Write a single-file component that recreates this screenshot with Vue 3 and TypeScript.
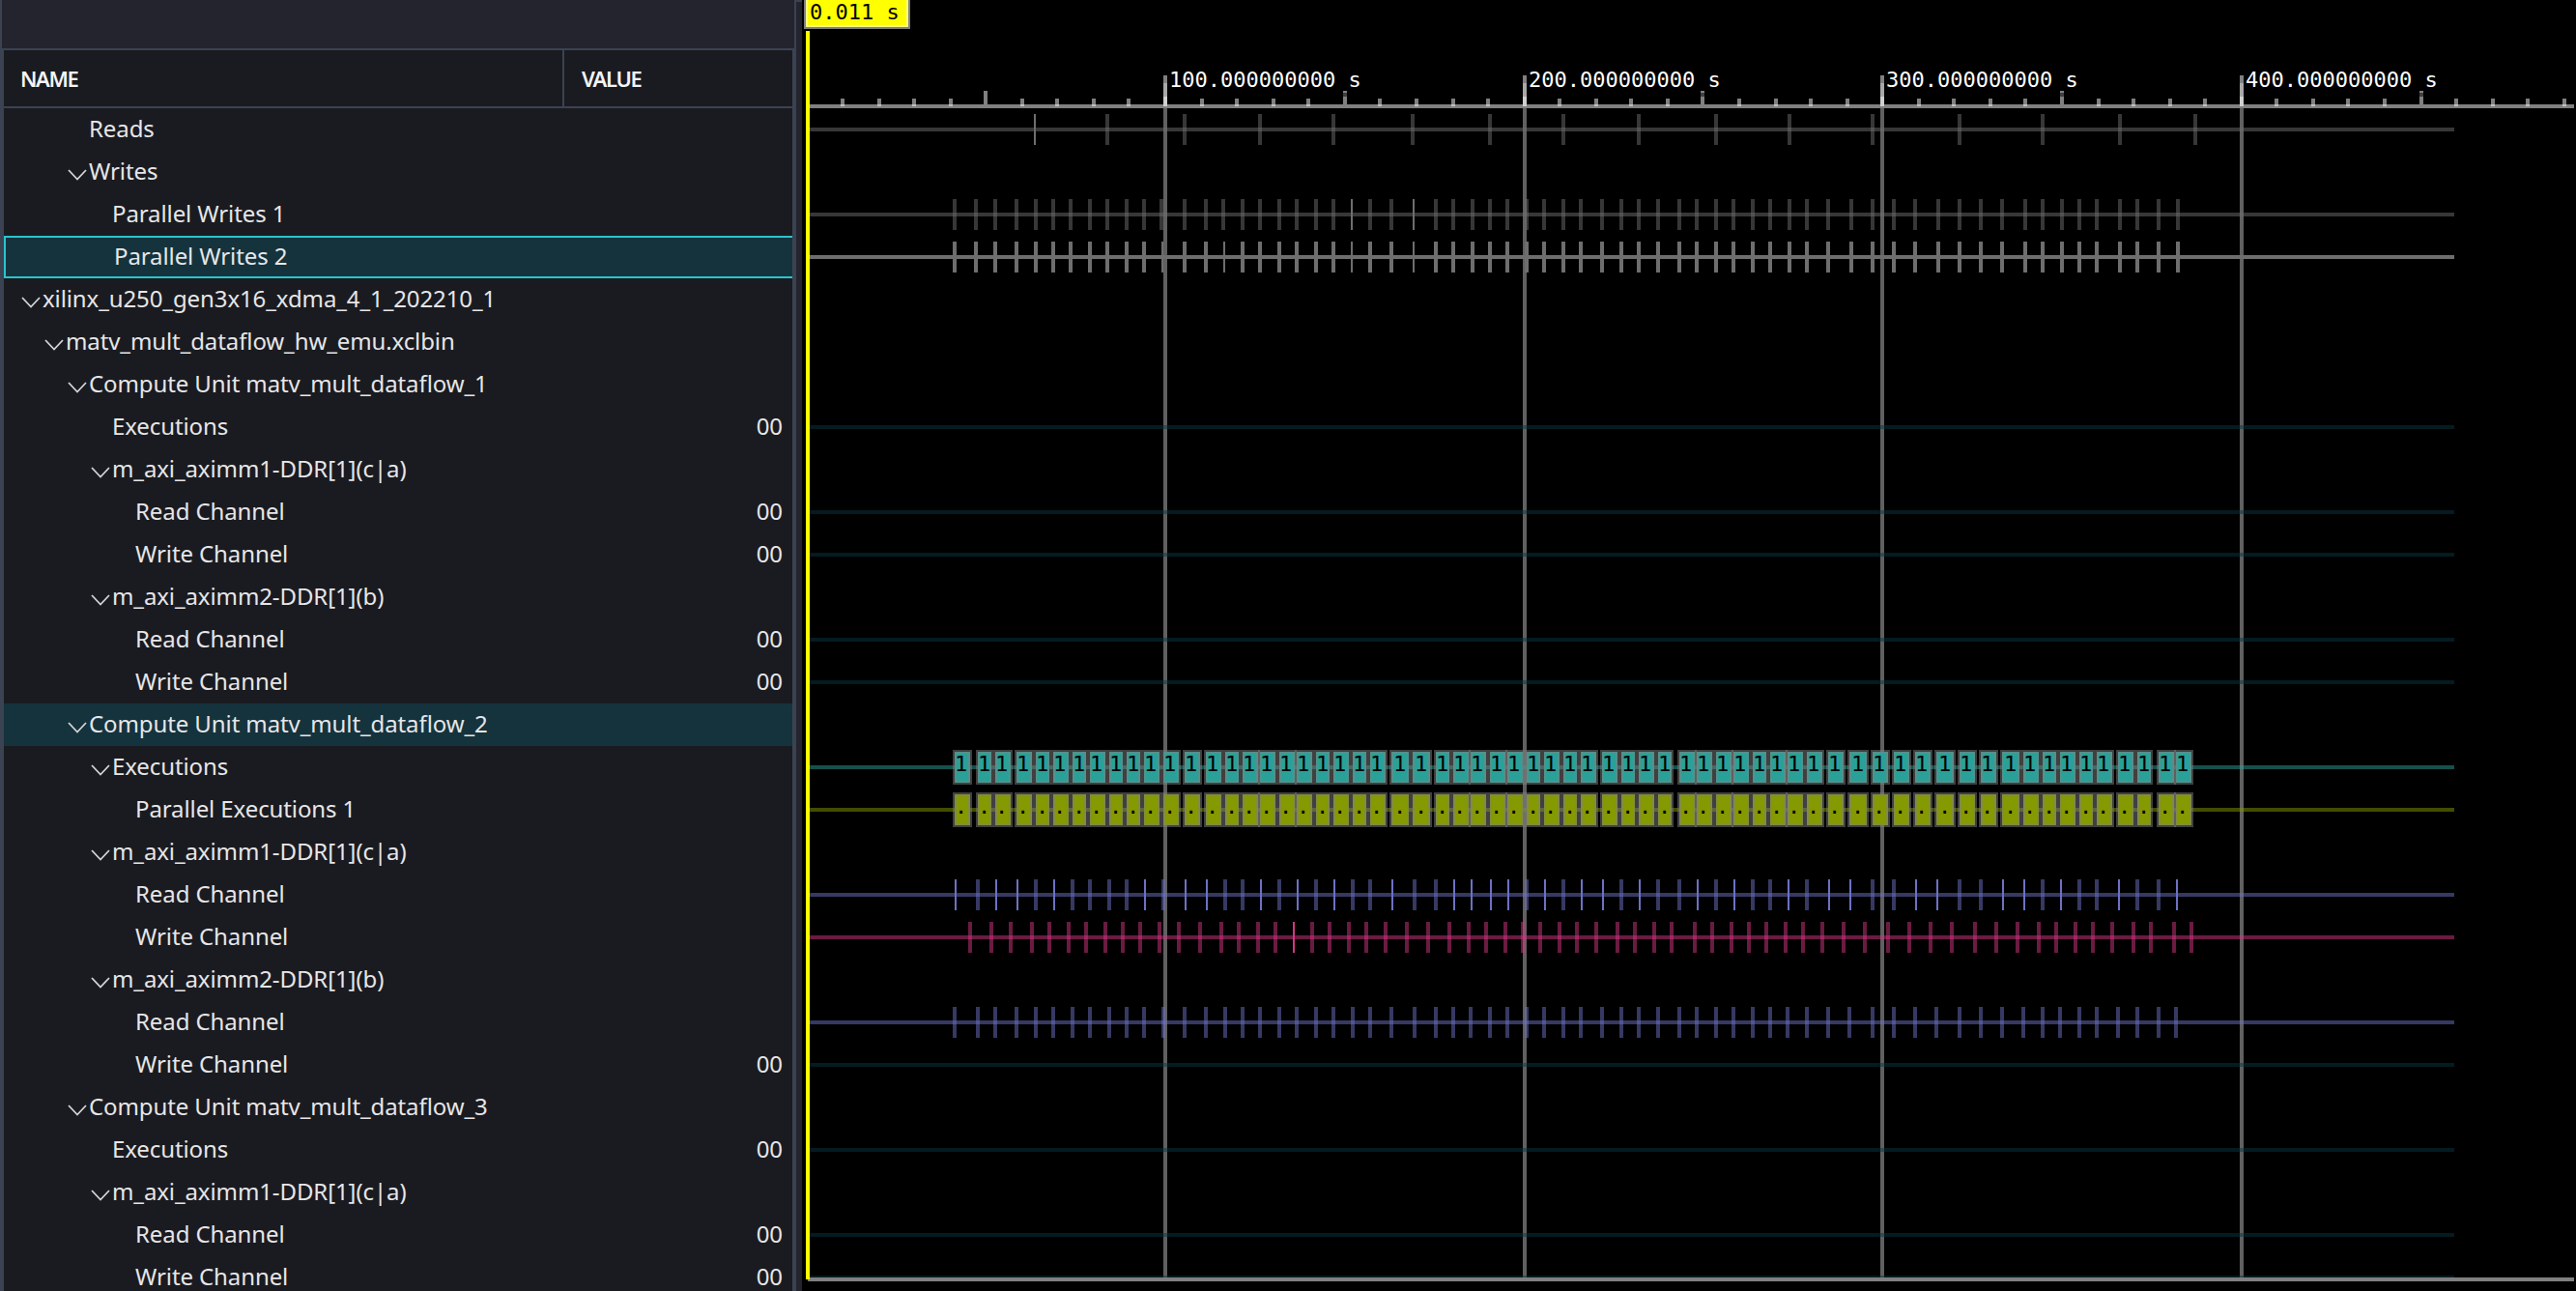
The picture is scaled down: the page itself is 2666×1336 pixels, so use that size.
<script setup lang="ts">
interface TreeRow {
  label: string
  level: number
  open?: boolean
  value?: string
  state?: 'selected' | 'related'
  wave?: Wave
}

interface Wave {
  color: string
  opacity?: number
  ticks?: Tick[]
  blocks?: 'count' | 'elided'
}

interface Tick {
  x: number
  w: number
  thin: boolean
}

const ROW = 44
const HEADER = 112

// A negative entry marks an instant event that falls inside a single pixel.
const toTicks = (xs: number[]): Tick[] =>
  xs.map((x) => ({ x: Math.abs(x), w: x < 0 ? 2 : 4, thin: x < 0 }))

const reads = toTicks([
  -1070, 1144, 1224, 1302, 1378, 1460, 1540, 1616, 1694, 1774, 1850, 1936, 2026, 2112, 2192, 2270,
])

const writes1 = toTicks([
  986, 1008, 1028, 1050, 1070, 1088, 1106, 1126, 1144, 1164, 1182, 1200, 1224, 1246, 1264, 1284,
  1302, 1322, 1340, 1360, 1378, -1398, 1416, 1438, -1462, 1484, 1502, 1522, 1540, 1558, 1578, 1596,
  1616, 1634, 1656, 1676, 1694, 1714, 1736, 1754, 1774, 1792, 1812, 1830, 1850, 1868, 1890, 1914,
  1936, 1958, 1980, 2004, 2026, 2048, 2070, 2094, 2112, 2132, 2150, 2168, 2192, 2210, 2232, 2252,
])

const writes2 = writes1.map((t) =>
  t.x === 1200 || t.x === 1264 ? { x: t.x + 2, w: 2, thin: true } : t,
)

const readA = toTicks([
  -988, 1010, -1030, -1052, 1070, -1090, 1108, 1126, 1146, 1164, -1184, 1202, -1226, -1248, 1266,
  1284, -1304, 1322, -1342, 1360, -1380, 1398, 1416, -1440, 1462, 1484, -1504, -1522, -1542, -1560,
  1578, -1598, 1616, -1636, -1658, 1676, -1696, 1714, 1736, -1756, 1774, -1794, 1812, 1830, -1850,
  1868, -1892, -1914, 1936, 1958, -1982, -2004, 2026, 2048, -2072, -2094, 2112, -2132, 2150, 2168,
  -2192, 2210, 2232, -2252,
])

const writeA = toTicks([
  1002, 1024, 1044, 1066, 1084, 1104, 1122, 1142, 1160, 1178, 1198, 1218, 1240, 1262, 1280, 1300,
  1318, -1338, 1356, 1374, 1394, 1412, 1432, 1454, 1476, 1498, 1518, 1536, 1556, 1574, 1592, 1612,
  1630, 1650, 1672, 1690, 1710, 1728, 1752, 1770, 1790, 1808, 1826, 1846, 1864, 1884, 1906, 1928,
  1952, 1974, 1996, 2018, 2042, 2064, 2086, 2108, 2126, 2146, 2164, 2184, 2206, 2224, 2248, 2266,
])

const readB = toTicks(readA.map((t) => (t.thin ? t.x - 2 : t.x)))

// Executions whose rounded extent grows by one device pixel on the right.
const wide = new Set([23, 24, 47, 51, 54])

// Each execution spans from its first read to its last write.
const executions = readA.map((t, i) => {
  const isWide = wide.has(i)
  const start = t.thin || isWide ? t.x : t.x + 2
  const end = writeA[i].x + (isWide ? 4 : 2)
  return { x: start, w: end - start, textX: isWide ? start + 2 : start }
})

const idle: Wave = { color: '#073642', opacity: 0.5 }

const rows: TreeRow[] = [
  { label: 'Reads', level: 2, wave: { color: '#6e6e6e', opacity: 0.5, ticks: reads } },
  { label: 'Writes', level: 2, open: true },
  { label: 'Parallel Writes 1', level: 3, wave: { color: '#6e6e6e', opacity: 0.5, ticks: writes1 } },
  {
    label: 'Parallel Writes 2',
    level: 3,
    state: 'selected',
    wave: { color: '#6e6e6e', opacity: 1, ticks: writes2 },
  },
  { label: 'xilinx_u250_gen3x16_xdma_4_1_202210_1', level: 0, open: true },
  { label: 'matv_mult_dataflow_hw_emu.xclbin', level: 1, open: true },
  { label: 'Compute Unit matv_mult_dataflow_1', level: 2, open: true },
  { label: 'Executions', level: 3, value: '00', wave: idle },
  { label: 'm_axi_aximm1-DDR[1](c|a)', level: 3, open: true },
  { label: 'Read Channel', level: 4, value: '00', wave: idle },
  { label: 'Write Channel', level: 4, value: '00', wave: idle },
  { label: 'm_axi_aximm2-DDR[1](b)', level: 3, open: true },
  { label: 'Read Channel', level: 4, value: '00', wave: idle },
  { label: 'Write Channel', level: 4, value: '00', wave: idle },
  { label: 'Compute Unit matv_mult_dataflow_2', level: 2, open: true, state: 'related' },
  { label: 'Executions', level: 3, open: true, wave: { color: '#2aa198', blocks: 'count' } },
  { label: 'Parallel Executions 1', level: 4, wave: { color: '#859900', blocks: 'elided' } },
  { label: 'm_axi_aximm1-DDR[1](c|a)', level: 3, open: true },
  { label: 'Read Channel', level: 4, wave: { color: '#6c71c4', ticks: readA } },
  { label: 'Write Channel', level: 4, wave: { color: '#d33682', ticks: writeA } },
  { label: 'm_axi_aximm2-DDR[1](b)', level: 3, open: true },
  { label: 'Read Channel', level: 4, wave: { color: '#6c71c4', ticks: readB.map((t) => ({ ...t, w: 4, thin: false })) } },
  { label: 'Write Channel', level: 4, value: '00', wave: idle },
  { label: 'Compute Unit matv_mult_dataflow_3', level: 2, open: true },
  { label: 'Executions', level: 3, value: '00', wave: idle },
  { label: 'm_axi_aximm1-DDR[1](c|a)', level: 3, open: true },
  { label: 'Read Channel', level: 4, value: '00', wave: idle },
  { label: 'Write Channel', level: 4, value: '00', wave: idle },
]

const waves = rows.flatMap((r, i) => (r.wave ? [{ ...r.wave, y: HEADER + i * ROW }] : []))

const majors = [
  { x: 1204, label: '100.000000000 s' },
  { x: 1576, label: '200.000000000 s' },
  { x: 1946, label: '300.000000000 s' },
  { x: 2318, label: '400.000000000 s' },
]
const mediums = [1018, 1390, 1760, 2132, 2504]
const minors = [
  870, 908, 944, 982, 1056, 1092, 1130, 1166, 1242, 1278, 1316, 1352, 1426, 1464, 1502, 1538, 1612,
  1650, 1686, 1724, 1798, 1836, 1872, 1910, 1984, 2020, 2058, 2094, 2170, 2206, 2244, 2280, 2354,
  2392, 2428, 2466, 2540, 2578, 2614, 2652,
]
</script>

<template>
  <div class="viewer">
    <section class="panel">
      <div class="toolbar"></div>
      <div class="table">
        <header class="head">
          <div class="col-name">NAME</div>
          <div class="col-value">VALUE</div>
        </header>
        <div class="rows">
          <div v-for="(r, i) in rows" :key="i" class="row" :class="[r.state, 'level-' + r.level]">
            <span class="toggle">
              <svg v-if="r.open" width="22" height="14" viewBox="0 0 22 14">
                <path d="M3 2 L12 11.5 L21 2" fill="none" stroke="#d4d4d6" stroke-width="1.8" />
              </svg>
            </span>
            <span class="label">{{ r.label }}</span>
            <span v-if="r.value" class="value">{{ r.value }}</span>
          </div>
        </div>
      </div>
    </section>
    <div class="splitter"></div>
    <svg class="waves" width="1836" height="1336" viewBox="830 0 1836 1336" shape-rendering="crispEdges">
      <rect x="830" y="0" width="1836" height="1336" fill="#000" />

      <!-- grid -->
      <rect v-for="m in majors" :key="'g' + m.x" :x="m.x" y="86" width="4" height="1236" fill="#606060" />

      <!-- ruler -->
      <rect x="836" y="108" width="1828" height="4" fill="#808080" />
      <g fill="#808080">
        <rect v-for="x in mediums" :key="x" :x="x" y="94" width="4" height="16" />
        <rect v-for="x in minors" :key="x" :x="x" y="102" width="4" height="6" />
      </g>
      <g fill="#c0c0c0">
        <rect v-for="x in minors" :key="x" :x="x" y="108" width="4" height="2" />
      </g>
      <rect v-for="x in mediums.slice(1)" :key="'d' + x" :x="x" y="96" width="4" height="4" fill="#404040" />
      <g v-for="m in majors" :key="m.x">
        <rect :x="m.x" y="78" width="4" height="8" fill="#808080" />
        <rect :x="m.x" y="86" width="4" height="14" fill="#a8a8a8" />
        <rect :x="m.x" y="100" width="4" height="10" fill="#d0d0d0" />
        <text class="mono" :x="m.x + 6" y="90" fill="#fff">{{ m.label }}</text>
      </g>

      <!-- traces -->
      <g v-for="w in waves" :key="w.y">
        <rect x="836" :y="w.y + 20" width="1704" height="4" :fill="w.color" :fill-opacity="w.opacity ?? 0.5" />
        <g v-if="w.ticks">
          <rect
            v-for="t in w.ticks"
            :key="t.x"
            :x="t.x"
            :y="w.y + 6"
            :width="t.w"
            height="32"
            :fill="w.color"
            :fill-opacity="t.thin ? 1 : (w.opacity ?? 0.5)"
          />
        </g>
        <g v-if="w.blocks">
          <g v-for="b in executions" :key="b.x">
            <rect
              :x="b.x"
              :y="w.y + 6"
              :width="b.w"
              height="32"
              :fill="w.color"
              stroke="#808080"
              stroke-opacity="0.5"
              stroke-width="4"
            />
            <text class="mono" :x="b.textX" :y="w.y + 26" fill="#000">{{ w.blocks === 'count' ? '1' : '.' }}</text>
          </g>
        </g>
      </g>

      <rect x="836" y="1322" width="1828" height="4" fill="#808080" />

      <!-- cursor -->
      <rect x="834" y="32" width="4" height="1292" fill="#ff0" />
      <rect x="834" y="-6" width="106" height="34" fill="#ff0" />
      <rect x="834" y="-6" width="106" height="34" fill="none" stroke="#fff" stroke-opacity="0.5" stroke-width="4" />
      <text class="mono" x="838" y="20" fill="#000">0.011 s</text>
    </svg>
  </div>
</template>

<style>
body {
  margin: 0;
  background: #000;
}
</style>

<style scoped>
.viewer {
  display: flex;
  width: 2666px;
  height: 1336px;
  overflow: hidden;
  background: #000;
  font-family: 'Noto Sans', 'Open Sans', sans-serif;
}
.panel {
  box-sizing: border-box;
  display: flex;
  flex-direction: column;
  width: 824px;
  height: 1336px;
  background: #3b4252;
}
.toolbar {
  flex: none;
  height: 50px;
  margin: 0 2px;
  background: #24242e;
}
.table {
  flex: 1;
  margin: 2px 4px 0;
  background: #1a1b20;
  overflow: hidden;
}
.head {
  display: flex;
  height: 58px;
  border-bottom: 2px solid #3b4252;
  color: #f4f4f5;
  font-size: 22px;
  font-weight: 600;
  letter-spacing: -1.4px;
  line-height: 58px;
}
.col-name {
  box-sizing: border-box;
  width: 578px;
  padding-left: 17px;
}
.col-value {
  flex: 1;
  border-left: 2px solid #3b4252;
  padding-left: 18px;
}
.row {
  box-sizing: border-box;
  display: flex;
  height: 44px;
  padding-right: 10px;
  color: #e6e6e8;
  font-size: 24px;
  letter-spacing: -0.1px;
  line-height: 41px;
  white-space: pre;
}
.level-0 { padding-left: 16px; }
.level-1 { padding-left: 40px; }
.level-2 { padding-left: 64px; }
.level-3 { padding-left: 88px; }
.level-4 { padding-left: 112px; }
.related {
  background: #15333d;
}
.selected {
  background: #15333d;
  border: 2px solid #2bc4cc;
  border-right: 0;
  line-height: 37px;
}
.toggle {
  flex: none;
  width: 24px;
  line-height: 0;
}
.toggle svg {
  margin-top: 18px;
}
.value {
  margin-left: auto;
}
.splitter {
  box-sizing: border-box;
  width: 6px;
  height: 1336px;
  border-top: 2px solid #3b4252;
  background: #24242e;
}
.waves {
  display: block;
  flex: none;
}
.mono {
  font-family: 'DejaVu Sans Mono', monospace;
  font-size: 22px;
}
</style>
